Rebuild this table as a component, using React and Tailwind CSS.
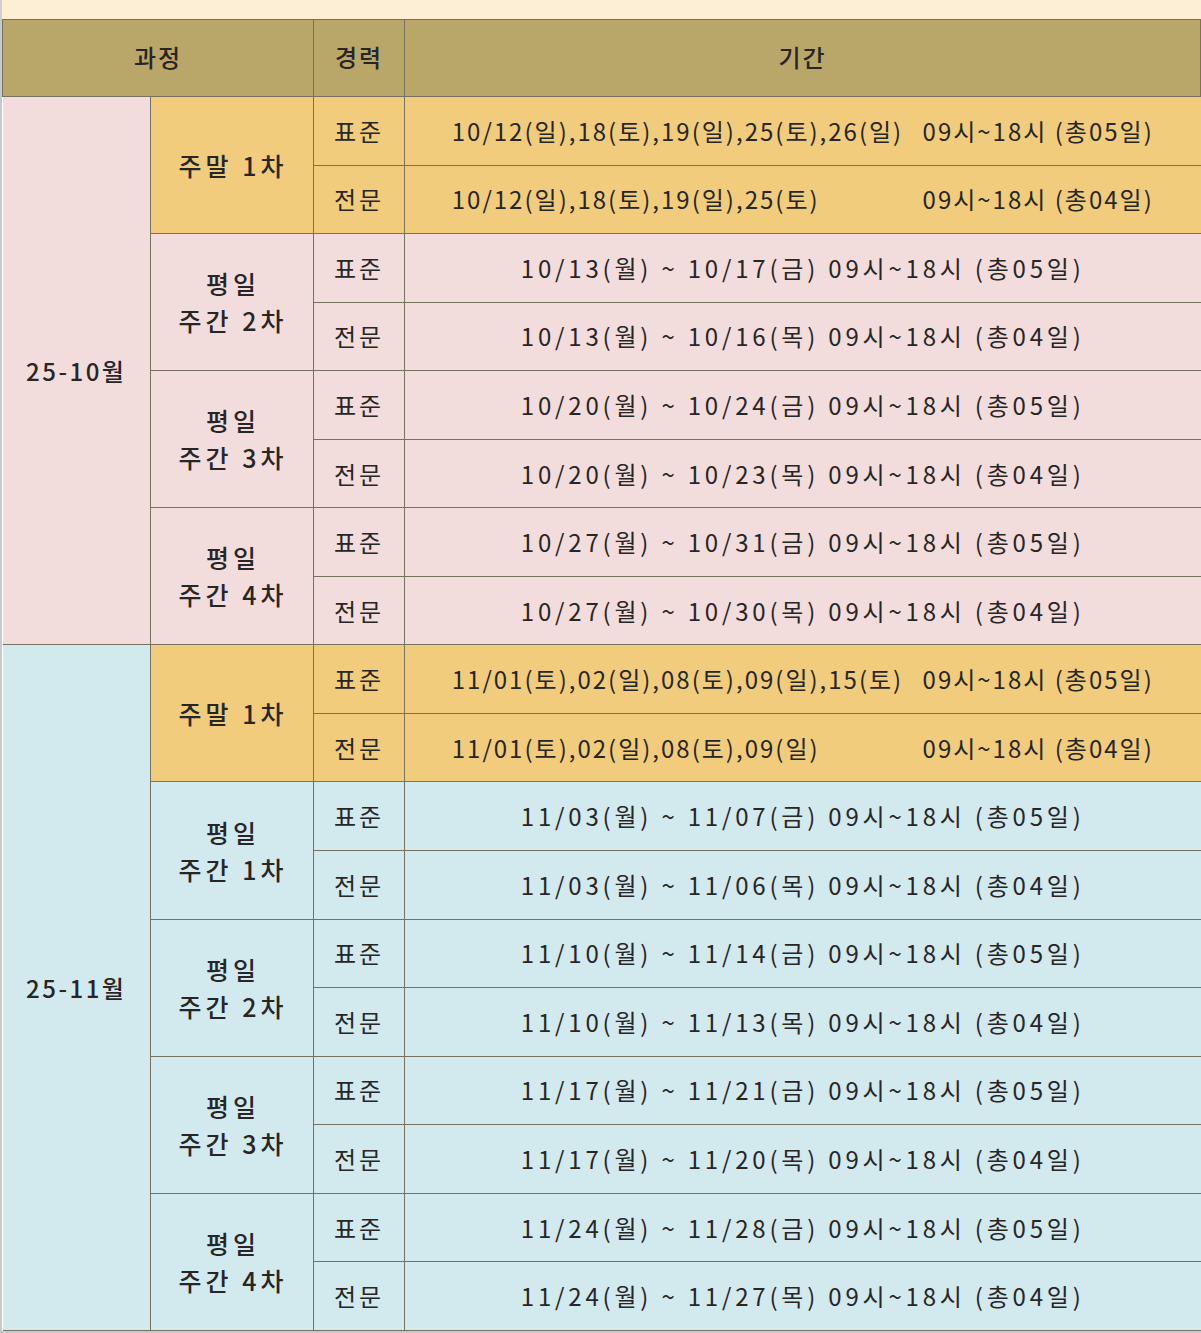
import React from "react";

const FONT = { fontFamily: '"Noto Sans CJK KR", "Noto Sans", sans-serif' };

const months = [
  {
    label: "25-10월",
    bg: "bg-[#f3dcdc]",
    groups: [
      {
        weekend: true,
        name: ["주말 1차"],
        rows: [
          ["표준", "10/12(일),18(토),19(일),25(토),26(일)", "09시~18시 (총05일)"],
          ["전문", "10/12(일),18(토),19(일),25(토)", "09시~18시 (총04일)"],
        ],
      },
      {
        name: ["평일", "주간 2차"],
        rows: [
          ["표준", "10/13(월) ~ 10/17(금) 09시~18시 (총05일)"],
          ["전문", "10/13(월) ~ 10/16(목) 09시~18시 (총04일)"],
        ],
      },
      {
        name: ["평일", "주간 3차"],
        rows: [
          ["표준", "10/20(월) ~ 10/24(금) 09시~18시 (총05일)"],
          ["전문", "10/20(월) ~ 10/23(목) 09시~18시 (총04일)"],
        ],
      },
      {
        name: ["평일", "주간 4차"],
        rows: [
          ["표준", "10/27(월) ~ 10/31(금) 09시~18시 (총05일)"],
          ["전문", "10/27(월) ~ 10/30(목) 09시~18시 (총04일)"],
        ],
      },
    ],
  },
  {
    label: "25-11월",
    bg: "bg-[#d2e9ee]",
    groups: [
      {
        weekend: true,
        name: ["주말 1차"],
        rows: [
          ["표준", "11/01(토),02(일),08(토),09(일),15(토)", "09시~18시 (총05일)"],
          ["전문", "11/01(토),02(일),08(토),09(일)", "09시~18시 (총04일)"],
        ],
      },
      {
        name: ["평일", "주간 1차"],
        rows: [
          ["표준", "11/03(월) ~ 11/07(금) 09시~18시 (총05일)"],
          ["전문", "11/03(월) ~ 11/06(목) 09시~18시 (총04일)"],
        ],
      },
      {
        name: ["평일", "주간 2차"],
        rows: [
          ["표준", "11/10(월) ~ 11/14(금) 09시~18시 (총05일)"],
          ["전문", "11/10(월) ~ 11/13(목) 09시~18시 (총04일)"],
        ],
      },
      {
        name: ["평일", "주간 3차"],
        rows: [
          ["표준", "11/17(월) ~ 11/21(금) 09시~18시 (총05일)"],
          ["전문", "11/17(월) ~ 11/20(목) 09시~18시 (총04일)"],
        ],
      },
      {
        name: ["평일", "주간 4차"],
        rows: [
          ["표준", "11/24(월) ~ 11/28(금) 09시~18시 (총05일)"],
          ["전문", "11/24(월) ~ 11/27(목) 09시~18시 (총04일)"],
        ],
      },
    ],
  },
];

const cell = "border border-[#77715f] text-center align-middle p-0";

export default function App() {
  return (
    <div className="w-[1201px] bg-white text-[#262626]" style={FONT}>
      <div className="h-[19px] bg-[#fcefd6] border-l-2 border-[#cfcfcf]" />
      <div className="border-l-2 border-b-[3px] border-[#c9c9c9]">
        <table className="w-full table-fixed border-collapse text-[24px] leading-none">
          <colgroup>
            <col className="w-[148px]" />
            <col className="w-[163px]" />
            <col className="w-[91px]" />
            <col />
          </colgroup>
          <thead>
            <tr className="h-[77px] bg-[#b9a76a]">
              <th colSpan={2} className={`${cell} font-medium tracking-[2px] pb-[3px]`}>과정</th>
              <th className={`${cell} font-medium tracking-[2px] pb-[3px]`}>경력</th>
              <th className={`${cell} font-medium tracking-[2px] pb-[3px]`}>기간</th>
            </tr>
          </thead>
          <tbody>
            {months.map((m) =>
              m.groups.map((g, gi) =>
                g.rows.map((r, ri) => {
                  const groupBg = g.weekend ? "bg-[#f1cc7c]" : m.bg;
                  return (
                    <tr key={m.label + gi + ri} className="h-[68.55px]">
                      {gi === 0 && ri === 0 && (
                        <td
                          rowSpan={m.groups.length * 2}
                          className={`${cell} ${m.bg} font-medium tracking-[2.5px] border-l-0`}
                        >
                          {m.label}
                        </td>
                      )}
                      {ri === 0 && (
                        <td rowSpan={2} className={`${cell} ${groupBg} font-medium text-[25px]`}>
                          <div className="flex flex-col items-center gap-[12px] tracking-[4px] pl-[2px]">
                            {g.name.map((n) => (
                              <span key={n} className="whitespace-pre">
                                {n}
                              </span>
                            ))}
                          </div>
                        </td>
                      )}
                      <td className={`${cell} ${groupBg} tracking-[3px]`}>{r[0]}</td>
                      <td className={`${cell} ${groupBg} border-r-0`}>
                        {r.length === 3 ? (
                          <div className="mx-auto flex w-[702px] justify-between tracking-[2px]">
                            <span>{r[1]}</span>
                            <span>{r[2]}</span>
                          </div>
                        ) : (
                          <span className="tracking-[3.8px] whitespace-pre">{r[1]}</span>
                        )}
                      </td>
                    </tr>
                  );
                })
              )
            )}
          </tbody>
        </table>
      </div>
    </div>
  );
}
